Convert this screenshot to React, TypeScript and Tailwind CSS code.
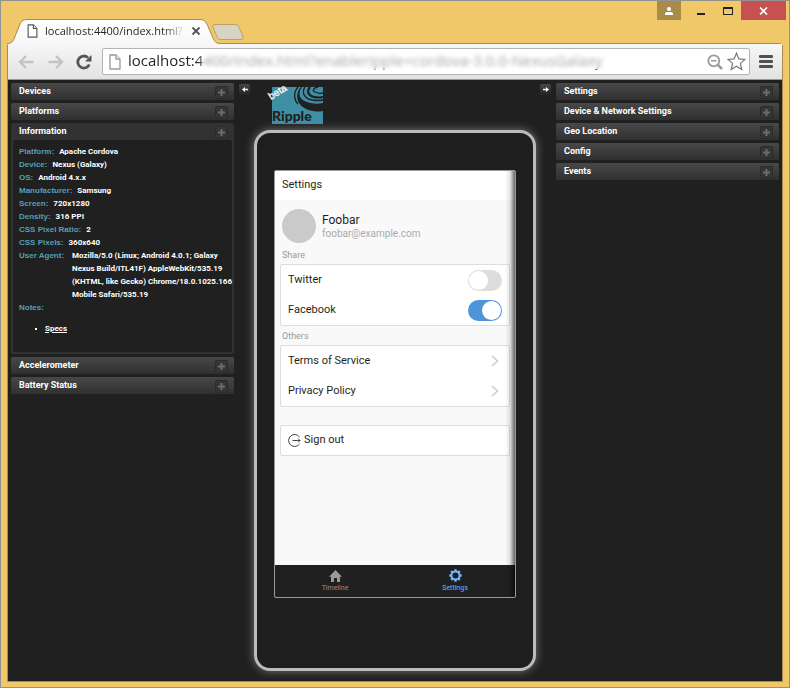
import React, { useState } from "react";

const ADDRESS = "localhost:4400/index.html?enableripple=cordova-3.0.0-NexusGalaxy";

const DEVICE_INFO = [
  ["Platform:", "Apache Cordova"],
  ["Device:", "Nexus (Galaxy)"],
  ["OS:", "Android 4.x.x"],
  ["Manufacturer:", "Samsung"],
  ["Screen:", "720x1280"],
  ["Density:", "316 PPI"],
  ["CSS Pixel Ratio:", "2"],
  ["CSS Pixels:", "360x640"],
];

function PageIcon({ className }: { className: string }) {
  return (
    <svg className={className} viewBox="0 0 12 16" fill="#fff" stroke="currentColor" strokeWidth="1.3">
      <path d="M1 1h6l4 4v10H1z" />
      <path d="M7 1v4h4" />
    </svg>
  );
}

function BrowserTab() {
  return (
    <div className="relative ml-1.5 flex h-6 w-[213px] items-center pl-5">
      <svg className="absolute -bottom-px left-0 h-[25px] w-[213px]" viewBox="0 0 213 25">
        <defs>
          <linearGradient id="tabFill" x1="0" y1="0" x2="0" y2="1">
            <stop offset="0" stopColor="#fff" />
            <stop offset="1" stopColor="#f7f7f7" />
          </linearGradient>
        </defs>
        <path
          d="M0 25C5 24.500 6 22 7 20L13 5Q15 .5 19 .5H194Q198 .5 200 5L206 19Q208 24.500 213 24.500V25Z"
          fill="url(#tabFill)"
        />
        <path
          d="M0 24.500C5 24.500 6 22 7 20L13 5Q15 .5 19 .5H194Q198 .5 200 5L206 19Q208 24.500 213 24.500"
          fill="none"
          stroke="#a98b4e"
        />
      </svg>
      <PageIcon className="relative h-3.5 w-[11px] text-[#555]" />
      <span className="relative ml-[7px] w-[138px] bg-linear-to-r from-[#222] from-85% to-[#ddd] bg-clip-text text-[11px]/4 whitespace-nowrap text-transparent">
        localhost:4400/index.html?
      </span>
      <button aria-label="Close tab" className="relative ml-2 text-[#555]">
        <svg className="size-2.5" viewBox="0 0 10 10" stroke="currentColor" strokeWidth="1.8">
          <path d="M1.500 1.500l7 7M8.500 1.500l-7 7" />
        </svg>
      </button>
    </div>
  );
}

function WindowControls() {
  return (
    <div className="mr-[3px] ml-auto flex h-[19px] self-start">
      <button aria-label="User" className="flex w-6 items-center justify-center bg-[#a88c48]">
        <svg className="h-2 w-2.5" viewBox="0 0 10 8" fill="#fff">
          <circle cx="5" cy="2" r="2" />
          <path d="M1 8V6.500Q1 5 3 5H7Q9 5 9 6.500V8z" />
        </svg>
      </button>
      <button aria-label="Minimize" className="ml-2 flex w-6 items-center justify-center">
        <svg className="size-2.5" viewBox="0 0 10 10">
          <path d="M1 7h8v2H1z" fill="#222" />
        </svg>
      </button>
      <button aria-label="Maximize" className="ml-0.5 flex w-[26px] items-center justify-center">
        <svg className="h-2 w-2.5" viewBox="0 0 10 8">
          <path d="M0 0h10v8H0zM1 2v5h8V2z" fill="#222" fillRule="evenodd" />
        </svg>
      </button>
      <button aria-label="Close" className="flex w-[45px] items-center justify-center bg-[#c75050]">
        <svg className="h-2 w-[9px]" viewBox="0 0 9 8" stroke="#fff" strokeWidth="1.7">
          <path d="M1 .5l7 7M8 .5l-7 7" />
        </svg>
      </button>
    </div>
  );
}

function Toolbar() {
  return (
    <div className="flex h-9 items-center border-b border-[#999] bg-linear-to-b from-[#f7f7f7] to-[#e2e2e2] pr-[9px] pl-2.5">
      <button aria-label="Back" className="text-[#c3c3c3]">
        <svg className="h-3.5 w-4" viewBox="0 0 16 14" fill="none" stroke="currentColor" strokeWidth="2.4">
          <path d="M15.500 7H2M8 1L2 7l6 6" />
        </svg>
      </button>
      <button aria-label="Forward" className="ml-3.5 text-[#c3c3c3]">
        <svg className="h-3.5 w-4" viewBox="0 0 16 14" fill="none" stroke="currentColor" strokeWidth="2.4">
          <path d="M.5 7H14M8 1l6 6-6 6" />
        </svg>
      </button>
      <button aria-label="Reload" className="ml-3 text-[#555]">
        <svg className="size-4" viewBox="0 0 16 16">
          <path d="M13.300 10.500A6 6 0 1 1 12 3.700" fill="none" stroke="currentColor" strokeWidth="2.800" />
          <path d="M15.500 1v6.500H9z" fill="currentColor" />
        </svg>
      </button>
      <div className="ml-2.5 flex h-[27px] flex-1 items-center rounded-xs border border-[#b4b4b4] bg-white px-1.5">
        <PageIcon className="h-4 w-3 text-[#999]" />
        <div className="relative ml-[7px] flex h-full flex-1 items-center">
          <input
            aria-label="Address"
            readOnly
            value={ADDRESS}
            className="h-full w-full bg-linear-to-r from-[#222] from-[68px] to-[#777] to-[76px] bg-clip-text pb-[3px] text-[15px] text-transparent outline-none"
          />
          <div className="absolute top-0 right-0 left-[74px] h-5 bg-white/30 backdrop-blur-[2px]" />
        </div>
        <button aria-label="Zoom" className="text-[#999]">
          <svg className="size-4" viewBox="0 0 16 16" fill="none" stroke="currentColor" strokeWidth="1.800">
            <circle cx="6.800" cy="6.800" r="5.500" />
            <path d="M4 6.800h5.600" strokeWidth="1.500" />
            <path d="M11 11l4 4" strokeWidth="2.500" />
          </svg>
        </button>
        <button aria-label="Bookmark" className="ml-1 -mr-[3px] text-[#777]">
          <svg className="size-[19px]" viewBox="0 0 19 19" fill="none" stroke="currentColor" strokeWidth="1.200">
            <path d="M9.500 1.200l2.400 5.700 6.100.5-4.600 4 1.400 6.100-5.300-3.300-5.300 3.300 1.400-6.100-4.600-4 6.100-.5z" />
          </svg>
        </button>
      </div>
      <button aria-label="Menu" className="ml-[9px] text-[#505050]">
        <svg className="h-[13px] w-3.5" viewBox="0 0 14 13" fill="currentColor">
          <rect width="14" height="3" rx="1" />
          <rect y="5" width="14" height="3" rx="1" />
          <rect y="10" width="14" height="3" rx="1" />
        </svg>
      </button>
    </div>
  );
}

function Panel({ title, children }: { title: string; children?: React.ReactNode }) {
  return (
    <section className="rounded-xs bg-[#323232]">
      <h2>
        <button
          className={
            "flex h-[17px] w-full items-center justify-between rounded-xs pr-1.5 pl-2 text-left font-[Roboto,sans-serif] text-[9px] font-bold text-white " +
            (children ? "" : "bg-linear-to-b from-[#484848] to-[#303030]")
          }
        >
          {title}
          <span className="mt-0.5 flex size-[13px] items-center justify-center rounded-xs border border-[#2b2b2b] bg-[#353535]">
            <svg className="size-[7px]" viewBox="0 0 7 7" fill="#6c6c6c">
              <path d="M2.500 0h2v2.500H7v2H4.500V7h-2V4.500H0v-2h2.500z" />
            </svg>
          </span>
        </button>
      </h2>
      {children && (
        <div className="px-0.5 pb-0.5">
          <div className="rounded-xs bg-[#202020]">{children}</div>
        </div>
      )}
    </section>
  );
}

function Information() {
  return (
    <div className="px-1.5 pt-[5px] pb-[17px] font-['Liberation_Sans',sans-serif] text-[8px]/[13px] font-bold text-white">
      <dl>
        {DEVICE_INFO.map(([label, value]) => (
          <div key={label} className="flex gap-[5px]">
            <dt className="text-[#559fb8]">{label}</dt>
            <dd className="font-[Roboto,sans-serif]">{value}</dd>
          </div>
        ))}
        <div className="flex">
          <dt className="w-[53px] shrink-0 text-[#559fb8]">User Agent:</dt>
          <dd className="font-[Roboto,sans-serif] whitespace-nowrap">
            Mozilla/5.0 (Linux; Android 4.0.1; Galaxy
            <br />
            Nexus Build/ITL41F) AppleWebKit/535.19
            <br />
            (KHTML, like Gecko) Chrome/18.0.1025.166
            <br />
            Mobile Safari/535.19
          </dd>
        </div>
        <div>
          <dt className="text-[#559fb8]">Notes:</dt>
          <dd>
            <ul className="mt-2 ml-4 flex">
              <li className="flex items-center gap-2">
                <span className="size-0.5 bg-white" />
                <a href="#specs" className="font-[Roboto,sans-serif] underline">
                  Specs
                </a>
              </li>
            </ul>
          </dd>
        </div>
      </dl>
    </div>
  );
}

function CollapseButton({ side }: { side: "left" | "right" }) {
  return (
    <button
      aria-label={"Collapse " + side + " panels"}
      className="mt-px flex size-[11px] items-center justify-center rounded-xs bg-linear-to-b from-[#484848] to-[#242424]"
    >
      <svg className="h-[5px] w-1.5" viewBox="0 0 6 5" fill="#fff">
        {side === "left" ? <path d="M0 2.500L3 0v1.700h3v1.600H3V5z" /> : <path d="M6 2.500L3 0v1.700H0v1.600h3V5z" />}
      </svg>
    </button>
  );
}

function RippleLogo() {
  return (
    <svg className="ml-4 h-[43px] w-[58px] overflow-visible" viewBox="0 1 58 43">
      <rect x="6" y="5" width="51" height="37" fill="#3e8ea4" />
      <path d="M36 5C31 12 34 18 41 20C47 22 52 22 57 21V29C47 31 35 27 32 19C30 13 32 8 35 5z" fill="#202020" />
      <g fill="none" stroke="#202020">
        <path d="M32 5C27 11 28 18 32 22" strokeWidth="1.300" />
        <path d="M39 5C35 11 39 17 46 18Q52 19 57 18" strokeWidth="1.300" />
        <path d="M44 5C40 10 43 14 48 15Q53 16 57 15" strokeWidth="2.200" />
        <path d="M52 5C47 6 46 9 49 10Q53 12 57 11" strokeWidth="1.300" />
      </g>
      <text x="6" y="39" fontFamily="Lato" fontWeight="900" fontSize="14" fill="#202020">
        Ripple
      </text>
      <text x="5" y="18" transform="rotate(-32 5 18)" fontFamily="Liberation Sans" fontSize="10" fill="#fff" stroke="#fff" strokeWidth=".3">
        beta
      </text>
    </svg>
  );
}

function SwitchRow({ label, initial }: { label: string; initial: boolean }) {
  const [on, setOn] = useState(initial);
  return (
    <label className="flex h-[30px] items-center justify-between px-[7px]">
      {label}
      <input
        type="checkbox"
        checked={on}
        onChange={() => setOn(!on)}
        className="flex h-[21px] w-[34px] appearance-none items-center rounded-full bg-[#ddd] px-px before:size-[19px] before:rounded-full before:bg-white checked:justify-end checked:bg-[#4d94d8]"
      />
    </label>
  );
}

function LinkRow({ label }: { label: string }) {
  return (
    <a href="#page" className="flex h-[30px] items-center justify-between pr-2.5 pl-[7px]">
      {label}
      <svg className="h-3 w-2" viewBox="0 0 8 12" fill="none" stroke="#ccc" strokeWidth="1.500">
        <path d="M1 1l5.500 5L1 11" />
      </svg>
    </a>
  );
}

function SettingsScreen() {
  return (
    <div className="relative flex flex-1 flex-col overflow-hidden rounded-xs border border-[#999] bg-[#f9f9f9] text-[11px] text-[#1f1f21]">
      <h1 className="flex h-[29px] items-center bg-white pl-[7px]">Settings</h1>
      <div className="flex-1 px-[5px] pt-[9px]">
        <div className="flex items-center gap-1.5 pl-0.5">
          <div className="size-[34px] rounded-full bg-[#cacaca]" />
          <div>
            <div className="text-xs/4">Foobar</div>
            <div className="text-[10px]/3 text-[#aaa]">foobar@example.com</div>
          </div>
        </div>
        <h2 className="mt-1 pl-0.5 text-[9px]/4 text-[#999]">Share</h2>
        <div className="mt-px rounded-xs border border-[#ddd] bg-white">
          <SwitchRow label="Twitter" initial={false} />
          <SwitchRow label="Facebook" initial={true} />
        </div>
        <h2 className="mt-0.5 pl-0.5 text-[9px]/4 text-[#999]">Others</h2>
        <div className="mt-px rounded-xs border border-[#ddd] bg-white">
          <LinkRow label="Terms of Service" />
          <LinkRow label="Privacy Policy" />
        </div>
        <button className="mt-[18px] flex h-[31px] w-full items-center gap-[3px] rounded-xs border border-[#ddd] bg-white pl-[7px]">
          <svg className="size-[13px]" viewBox="0 0 13 13" fill="none" stroke="#333" strokeWidth=".9">
            <path d="M11.500 3A6 6 0 1 0 11.500 10M4.500 6.500H12M10 4.500l2 2-2 2" />
          </svg>
          Sign out
        </button>
      </div>
      <nav className="grid h-8 grid-cols-2 bg-[#202020] text-[7px]/[9px]">
        <button className="flex flex-col items-center justify-center gap-0.5 text-[#999]">
          <svg className="h-3 w-[13px]" viewBox="0 0 13 12" fill="currentColor">
            <path d="M6.500 0L13 6.700H11V12H8V8H5v4H2V6.700H0z" />
          </svg>
          <span className="text-[#a48a74]">Timeline</span>
        </button>
        <button className="flex flex-col items-center justify-center gap-0.5 text-[#70b5ff]">
          <svg className="size-[13px]" viewBox="0 0 14 14" fill="none" stroke="currentColor">
            <circle cx="7" cy="7" r="4.300" strokeWidth="2" />
            <path
              d="M7 .3v2M7 11.700v2M.3 7h2M11.700 7h2M2.300 2.300l1.400 1.400M10.300 10.300l1.400 1.400M11.700 2.300l-1.400 1.400M3.700 10.300l-1.400 1.400"
              strokeWidth="2.600"
            />
          </svg>
          Settings
        </button>
      </nav>
      <div className="pointer-events-none absolute inset-y-0 right-0 w-2.5 bg-linear-to-r from-transparent via-black/10 to-black/60" />
    </div>
  );
}

export default function App() {
  return (
    <div className="flex min-h-screen flex-col border border-[#929292] bg-[#f0c869] font-['Open_Sans',sans-serif]">
      <header className="flex h-[42px] items-end">
        <BrowserTab />
        <button aria-label="New tab" className="-ml-2 mb-[3px] self-end">
          <svg className="h-4 w-8" viewBox="0 0 32 16">
            <path d="M3 .5H23Q26 .5 27 3L31 13Q32 15.500 29 15.500H9Q6 15.500 5 13L1 3Q0 .5 3 .5z" fill="#d8d4c3" stroke="#baa16b" />
          </svg>
        </button>
        <WindowControls />
      </header>
      <div className="mx-1.5 mb-[5px] flex flex-1 flex-col rounded-t-sm border border-[#a98b4e] bg-[#202020]">
        <Toolbar />
        <main className="flex flex-1 px-[3px] pt-[3px]">
          <aside className="flex w-[223px] shrink-0 flex-col gap-[3px]">
            <Panel title="Devices" />
            <Panel title="Platforms" />
            <Panel title="Information">
              <Information />
            </Panel>
            <Panel title="Accelerometer" />
            <Panel title="Battery Status" />
          </aside>
          <div className="min-w-0 flex-1 px-[5px]">
            <div className="flex h-[47px] items-start">
              <CollapseButton side="left" />
              <RippleLogo />
              <div className="ml-auto">
                <CollapseButton side="right" />
              </div>
            </div>
            <div className="mx-auto flex h-[541px] w-[282px] flex-col rounded-2xl border-3 border-[#bbb] bg-[#1e1e1e] px-[17px] pt-[37px] pb-[70px] font-[Roboto,sans-serif] shadow-[0_0_10px_#777]">
              <SettingsScreen />
            </div>
          </div>
          <aside className="flex w-[223px] shrink-0 flex-col gap-[3px]">
            <Panel title="Settings" />
            <Panel title="Device & Network Settings" />
            <Panel title="Geo Location" />
            <Panel title="Config" />
            <Panel title="Events" />
          </aside>
        </main>
      </div>
    </div>
  );
}
